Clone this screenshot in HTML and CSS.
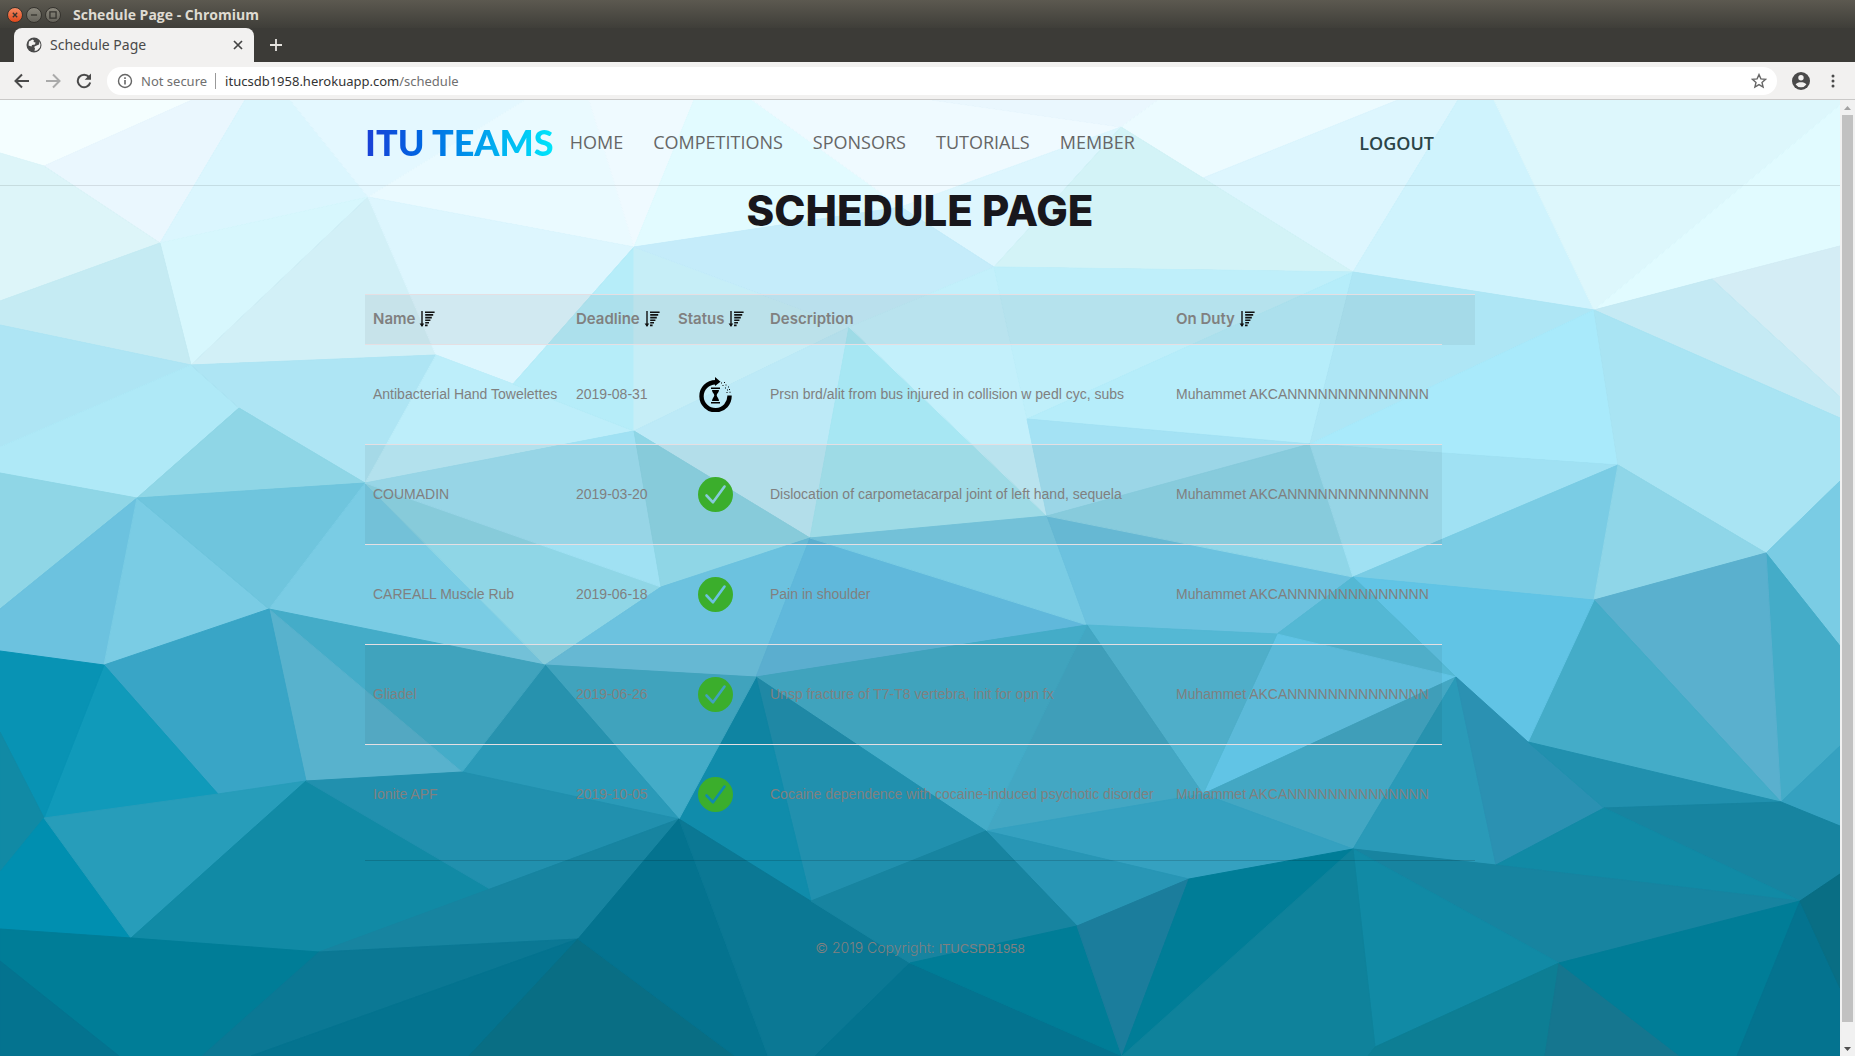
FILE: index.html
```html
<!DOCTYPE html>
<html lang="en">
<head>
<meta charset="utf-8">
<title>Schedule Page</title>
<link rel="stylesheet" href="styles.css">
</head>
<body>
<svg class="defs" aria-hidden="true">
  <mask id="tick">
    <rect width="35" height="35" fill="#fff"/>
    <path d="M8.500 18.500l6.500 6.800L26.500 9.500" fill="none" stroke="#000" stroke-width="2.600" stroke-linecap="round" stroke-linejoin="round"/>
  </mask>
  <symbol id="sort" viewBox="0 0 16 16">
    <path d="M3 0v15" stroke="#111" stroke-width="1.4"/>
    <path d="M0.6 12.6h4.6L3 16z" fill="#111"/>
    <path d="M6 1.2h9.6M6.2 3.9h8M6.2 6.6h6.600M6.2 9.2h5.2M6.2 11.8h3.8M6 14.4h2.6" stroke="#111" stroke-width="1.6"/>
  </symbol>
  <symbol id="done" viewBox="0 0 35 35">
    <circle cx="17.5" cy="17.5" r="17.5" fill="#3bae2c" mask="url(#tick)"/>
  </symbol>
</svg>

<div class="titlebar">
  <button class="win win-close" aria-label="Close window"><svg viewBox="0 0 16 16"><path d="M5.500 5.500l5 5M10.500 5.500l-5 5"/></svg></button>
  <button class="win" aria-label="Minimize"><svg viewBox="0 0 16 16"><path d="M4.500 8h7"/></svg></button>
  <button class="win" aria-label="Maximize"><svg viewBox="0 0 16 16"><path d="M4.500 4.500h7v7h-7z"/></svg></button>
  <span class="win-title">Schedule Page - Chromium</span>
</div>

<div class="tabstrip">
  <div class="tab">
    <svg class="globe" viewBox="0 0 16 16"><circle cx="8" cy="8" r="7.500" fill="#4a4a4a"/><path d="M3 4.500l3.500-2 1.500 1-.5 1.500 2 .5-.5 2-3 .5-.5 1.500-3-1zM9.500 9l3.500-1.500.5-3 1 3-.5 3-3 3-2.500.5.5-3-1-1z" fill="#f2f1f0"/></svg>
    <span class="tab-title">Schedule Page</span>
    <button class="plain" aria-label="Close tab"><svg width="10" height="10" viewBox="0 0 10 10"><path d="M1 1l8 8M9 1l-8 8" stroke="#444" stroke-width="1.700"/></svg></button>
  </div>
  <button class="plain new-tab" aria-label="New tab"><svg width="12" height="12" viewBox="0 0 12 12"><path d="M6 0v12M0 6h12" stroke="#e6e4df" stroke-width="1.800"/></svg></button>
</div>

<div class="toolbar">
  <button class="plain" aria-label="Back"><svg width="16" height="16" viewBox="0 0 16 16" fill="none" stroke="#4a4a4a" stroke-width="2"><path d="M15 8H2M8 1.500L1.500 8 8 14.500"/></svg></button>
  <button class="plain" aria-label="Forward"><svg width="16" height="16" viewBox="0 0 16 16" fill="none" stroke="#aaa" stroke-width="2"><path d="M1 8h13M8 1.500L14.500 8 8 14.500"/></svg></button>
  <button class="plain" aria-label="Reload"><svg width="16" height="16" viewBox="0 0 16 16"><path d="M13 4A6.300 6.300 0 1 0 14.200 9.500" fill="none" stroke="#4a4a4a" stroke-width="2"/><path d="M15 0.500v6.300H8.700z" fill="#4a4a4a"/></svg></button>
  <div class="address">
    <svg width="16" height="16" viewBox="0 0 16 16"><circle cx="8" cy="8" r="6.500" fill="none" stroke="#666" stroke-width="1.400"/><path d="M8 7v4.500M8 4.300v1.600" stroke="#666" stroke-width="1.600"/></svg>
    <span class="secure">Not secure</span>
    <span class="url">itucsdb1958.herokuapp.com<span class="path">/schedule</span></span>
    <button class="plain" aria-label="Bookmark"><svg width="16" height="16" viewBox="0 0 16 16"><path d="M8 1.600l1.900 4.300 4.700.4-3.600 3.100 1.100 4.600L8 11.600 3.900 14 5 9.400 1.400 6.300l4.700-.4z" fill="none" stroke="#666" stroke-width="1.400"/></svg></button>
  </div>
  <button class="plain" aria-label="Profile"><svg width="18" height="18" viewBox="0 0 18 18"><circle cx="9" cy="9" r="9" fill="#4a4a4a"/><circle cx="9" cy="5.800" r="2.700" fill="#f2f1f0"/><path d="M3.600 12.600C4.500 10.800 7 10.200 9 10.200s4.500.6 5.400 2.400A6.500 6.500 0 0 1 9 15.300a6.500 6.500 0 0 1-5.400-2.700z" fill="#f2f1f0"/></svg></button>
  <button class="plain" aria-label="Menu"><svg width="16" height="16" viewBox="0 0 16 16" fill="#4a4a4a"><circle cx="8" cy="3" r="1.500"/><circle cx="8" cy="8" r="1.500"/><circle cx="8" cy="13" r="1.500"/></svg></button>
</div>

<div class="viewport">
  <div class="page">
    <svg class="backdrop" viewBox="0 100 1840 956" preserveAspectRatio="none" aria-hidden="true">
      <g id="facets"></g>
    </svg>
    <header class="site-header">
      <nav class="container nav">
        <a class="brand" href="#">ITU TEAMS</a>
        <a href="#">HOME</a>
        <a href="#">COMPETITIONS</a>
        <a href="#">SPONSORS</a>
        <a href="#">TUTORIALS</a>
        <a href="#">MEMBER</a>
        <a class="logout" href="#">LOGOUT</a>
      </nav>
    </header>
    <main class="container">
      <h1>SCHEDULE PAGE</h1>
      <table class="schedule">
        <colgroup><col class="c-name"><col class="c-deadline"><col class="c-status"><col class="c-desc"><col class="c-duty"><col></colgroup>
        <thead>
          <tr>
            <th>Name <button class="plain" aria-label="Sort by name"><svg class="sort"><use href="#sort"/></svg></button></th>
            <th>Deadline <button class="plain" aria-label="Sort by deadline"><svg class="sort"><use href="#sort"/></svg></button></th>
            <th>Status <button class="plain" aria-label="Sort by status"><svg class="sort"><use href="#sort"/></svg></button></th>
            <th>Description</th>
            <th>On Duty <button class="plain" aria-label="Sort by person on duty"><svg class="sort"><use href="#sort"/></svg></button></th>
            <th></th>
          </tr>
        </thead>
        <tbody>
          <tr>
            <td>Antibacterial Hand Towelettes</td><td>2019-08-31</td>
            <td class="status"><svg class="mark" viewBox="0 0 35 35" role="img" aria-label="Pending">
              <path d="M17.500 5.200A14 14 0 1 0 31.500 18.500" fill="none" stroke="#000" stroke-width="4.400"/>
              <path d="M17 0l5.500 4.700L17 9z"/>
              <path d="M13 10.500h9v1.400h-9zM13 25h9v1.400h-9zM14 13h7c0 2.600-2.300 3.600-2.300 5.300S21 21.500 21 24h-7c0-2.500 2.300-4 2.300-5.700S14 15.600 14 13z"/>
              <path d="M23 5.500h1v1h-1zM26 5h1v1h-1zM24.500 8h1v1h-1zM27.500 7.500h1v1h-1zM27 10.500h1v1h-1zM30 9.500h1v1h-1zM29 12.500h1v1h-1zM31 12h1v1h-1zM28.500 15h1v1h-1zM31.500 14.800h1v1h-1z"/>
            </svg></td>
            <td>Prsn brd/alit from bus injured in collision w pedl cyc, subs</td><td>Muhammet AKCANNNNNNNNNNNNNN</td>
          </tr>
          <tr>
            <td>COUMADIN</td><td>2019-03-20</td>
            <td class="status"><svg class="mark" role="img" aria-label="Done"><use href="#done"/></svg></td>
            <td>Dislocation of carpometacarpal joint of left hand, sequela</td><td>Muhammet AKCANNNNNNNNNNNNNN</td>
          </tr>
          <tr>
            <td>CAREALL Muscle Rub</td><td>2019-06-18</td>
            <td class="status"><svg class="mark" role="img" aria-label="Done"><use href="#done"/></svg></td>
            <td>Pain in shoulder</td><td>Muhammet AKCANNNNNNNNNNNNNN</td>
          </tr>
          <tr>
            <td>Gliadel</td><td>2019-06-26</td>
            <td class="status"><svg class="mark" role="img" aria-label="Done"><use href="#done"/></svg></td>
            <td>Unsp fracture of T7-T8 vertebra, init for opn fx</td><td>Muhammet AKCANNNNNNNNNNNNNN</td>
          </tr>
          <tr>
            <td>Ionite APF</td><td>2019-10-05</td>
            <td class="status"><svg class="mark" role="img" aria-label="Done"><use href="#done"/></svg></td>
            <td>Cocaine dependence with cocaine-induced psychotic disorder</td><td>Muhammet AKCANNNNNNNNNNNNNN</td>
          </tr>
        </tbody>
      </table>
      <hr>
    </main>
    <footer>© 2019 Copyright: <a href="#">ITUCSDB1958</a></footer>
  </div>
  <div class="scrollbar" aria-hidden="true">
    <svg width="15" height="15" viewBox="0 0 15 15"><path d="M4 10h7L7.500 6z" fill="#a3a3a3"/></svg>
    <div class="track"><div class="thumb"></div></div>
    <svg width="15" height="15" viewBox="0 0 15 15"><path d="M4 6h7l-3.500 4z" fill="#505050"/></svg>
  </div>
</div>
<script src="facets.js"></script>
</body>
</html>
```
FILE: styles.css
```css
* { box-sizing: border-box; }
body {
  margin: 0;
  height: 100vh;
  display: flex;
  flex-direction: column;
  overflow: hidden;
  font-family: "Open Sans", sans-serif;
}
a { color: inherit; text-decoration: none; }
.defs { position: absolute; width: 0; height: 0; }
.plain { border: 0; padding: 0; background: none; display: inline-flex; align-items: center; justify-content: center; }

/* window frame */
.titlebar {
  height: 28px;
  flex: none;
  display: flex;
  align-items: center;
  gap: 3px;
  padding: 1px 7px 0;
  background: linear-gradient(#5c5950, #3f3e39);
}
.win {
  width: 16px;
  height: 16px;
  padding: 0;
  border: 1px solid #35332e;
  border-radius: 50%;
  background: linear-gradient(#8a877c, #65635b);
  display: flex;
}
.win svg { width: 14px; height: 14px; fill: none; stroke: #35332e; stroke-width: 1.5; }
.win-close { background: linear-gradient(#f58a62, #e0481b); }
.win-title { margin-left: 9px; font: 700 14px/20px "Open Sans", sans-serif; color: #dfdbd2; }

.tabstrip { height: 34px; flex: none; display: flex; background: #3c3b37; padding-left: 14px; }
.tab {
  width: 240px;
  display: flex;
  align-items: center;
  gap: 8px;
  padding: 0 11px 0 12px;
  border-radius: 8px 8px 0 0;
  background: #f2f1f0;
  font: 14px/20px "Noto Sans", sans-serif;
  color: #4a4a4a;
}
.globe { width: 16px; height: 16px; }
.tab-title { flex: 1; }
.new-tab { width: 44px; }

.toolbar {
  height: 38px;
  flex: none;
  display: flex;
  align-items: center;
  gap: 15px;
  padding: 0 14px;
  background: #f2f1f0;
  border-bottom: 1px solid #cac9c8;
}
.address {
  flex: 1;
  height: 28px;
  display: flex;
  align-items: center;
  padding: 0 10px;
  border-radius: 14px;
  background: #fff;
  font: 13px/20px "Noto Sans", sans-serif;
}
.secure { color: #707070; padding: 0 8px; line-height: 16px; border-right: 1px solid #999; }
.url { flex: 1; padding-left: 9px; color: #333; }
.path { color: #707070; }

/* web page */
.viewport { flex: 1; display: flex; min-height: 0; }
.page { flex: 1; position: relative; z-index: 0; overflow: hidden; color: gray; background: #1784a0; }
.backdrop { position: absolute; inset: 0; width: 100%; height: 100%; z-index: -1; }
.container { width: 100%; max-width: 1110px; margin: 0 auto; }

.site-header { border-bottom: 1px solid rgba(0, 0, 0, .1); }
.nav { display: flex; align-items: center; gap: 30px; height: 85px; padding-bottom: 2px; font-size: 18px; color: #666; }
.brand {
  margin-right: -14px;
  font: 900 36px/44px "Lato Black", Lato, sans-serif;
  color: transparent;
  background: linear-gradient(90deg, #1a3fd6, #0066e2 30%, #00e6fb);
  background-clip: text;
}
.logout { margin: 2px 41px 0 auto; font-weight: 600; color: #2b4447; }

h1 { margin: 0 0 58px; font: 800 42px/50px Inter, sans-serif; color: #18171c; text-align: center; }

.schedule { width: 100%; table-layout: fixed; border-collapse: collapse; font: 14px/20px "Liberation Sans", Arial, sans-serif; }
.c-name { width: 203px; }
.c-deadline { width: 102px; }
.c-status { width: 92px; }
.c-desc { width: 406px; }
.c-duty { width: 274px; }
th, td { padding: 0 8px 2px; text-align: left; border-top: 1px solid #e5dfe3; white-space: nowrap; }
th { height: 50px; padding-right: 0; font: 600 15px/20px Inter, sans-serif; background: rgba(0, 0, 0, .05); }
td { height: 100px; }
tbody tr:nth-child(even) td { background: rgba(0, 0, 0, .05); }
.status { padding: 0 10px 0 8px; }
.sort { width: 16px; height: 16px; display: block; }
th .plain { vertical-align: middle; }
.mark { width: 35px; height: 35px; display: block; margin: 0 auto; }
hr { margin: 15px 0 0; border: 0; border-top: 1px solid rgba(0, 0, 0, .15); }
footer { margin-top: 77px; text-align: center; font: 300 14px/20px Inter, sans-serif; }
footer a { font: 13px/20px "Liberation Sans", Arial, sans-serif; }

.scrollbar { width: 15px; flex: none; display: flex; flex-direction: column; background: #f1f1f1; }
.track { flex: 1; padding: 0 2px; }
.thumb { height: 98%; background: #c1c1c1; }
```
FILE: facets.js
```js
// Low-poly backdrop: shared vertices, then one facet per line (colour + corners).
const v = {
  A:[44,166],B:[160,243],C:[191,365],D:[368,197],E:[436,355],F:[513,384],G:[239,408],H:[137,498],I:[365,483],
  J:[634,247],K:[901,207],L:[994,267],M:[1121,127],N:[1203,178],P:[1353,272],Q:[1594,310],R:[1712,279],S:[1310,444],
  T:[1618,465],U:[1766,553],V:[849,327],W:[634,431],X:[810,538],Y:[1047,516],Z:[1027,419],AA:[661,587],BB:[1353,577],
  CC:[1594,600],DD:[1087,625],EE:[1277,634],FF:[1456,677],GG:[1528,742],HH:[1203,794],II:[986,831],JJ:[1353,849],
  KK:[1189,879],LL:[1077,926],MM:[1122,1056],OO:[756,677],PP:[545,665],QQ:[679,819],RR:[811,901],SS:[910,963],
  TT:[578,939],UU:[319,952],VV:[490,889],XX:[462,772],YY:[306,781],ZZ:[269,609],A1:[104,665],A2:[218,794],
  A3:[44,818],A4:[131,938],B1:[1781,802],B2:[1604,808],B3:[1496,865],B4:[1800,901],B5:[1559,963],B6:[1375,1047]
};
const facets = `
f4feff 0,100 192,100 A 0,153
eaf7fe A 192,100 245,100 B
ddf5f9 0,153 A B 0,301
dbf6fe 245,100 290,100 D B
e4f8ff 290,100 525,100 D
eafaff D 525,100 589,100 J
effaff J 589,100 694,100
e2fbff J 694,100 752,100 K
effaff 752,100 932,100 M K
eaf7fe 932,100 1158,100 M
ecfbff M 1158,100 1398,100 N
ddf6fe N 1398,100 1458,100 P
cff3fd P 1458,100 1494,100 Q
ddf7fc Q 1494,100 1840,100 1840,105
e1fbff Q 1840,105 1840,246 R
d4edf5 R 1840,246 1840,397
c5eaf4 Q R 1840,397 1840,418
d7f7fd B D C
d2f0f7 D E C
ddf6fe D J F E
ddf6fe K M L
d3f3f7 L M N P
c5ebf3 0,301 B C 0,325
aee5f4 0,325 C 0,447
afe9f7 C G H 0,473 0,447
aee5f4 C E I G
bdeefa E F W I
b6edf9 F J W
c6eef7 J V W
c5ecfa J K L V
bdeaf7 W V X
a7e7f3 V Y X
c3f0fb V L Z Y
bfeffa L P Z
b6edfa Z P S
aee6f5 P Q S
a9eafb Q T S
a9e4f3 Q 1840,418 1840,481 U T
a4e2f4 Z S Y
8fd6e6 G I H
8fd6e6 0,473 H 0,609
6cc2df 0,609 H A1 0,651
7acce4 H ZZ A1
6fc5dd H I ZZ
7acce4 I PP ZZ
8fd6e6 I AA PP
a0e1f3 I W AA
8fd6e6 W X AA
6cc2df X OO PP AA
60b8db X DD OO
7acce4 X Y DD
6cc2df Y BB EE DD
8fd6e8 Y S BB
a0e1f3 S T BB
7acce4 T CC BB
8fd6e8 T U CC
7acce4 U 1840,481 1840,646
44acc8 U 1840,646 1840,746 B1
5ab0ce CC U B1
44acc8 CC B1 GG
61c4e5 BB CC GG FF
54b8d4 BB FF EE
61c4e5 EE FF HH
54b8d4 DD EE HH
43a7c3 DD HH II
43a7c3 HH FF JJ
35a1c0 II HH JJ KK
2896b5 II KK LL
44acc8 OO DD II
2190ae OO II RR
108cab OO RR QQ
44acc8 PP OO QQ
2a9ab8 XX PP QQ
44acc8 ZZ PP XX
58b2cd ZZ XX YY
39a5c6 A1 ZZ YY A2
109aba A1 A2 A3
0893b4 0,651 A1 A3 0,732
118aa5 0,732 A3 0,872
008fb0 0,872 A3 A4 0,929
279dba A3 A2 YY A4
118aa5 YY VV UU A4
2190ae YY XX QQ VV
1784a0 VV QQ TT UU
007d97 0,929 A4 UU 202,1056 119,1056 0,961
04738f 0,961 119,1056 0,1056
0b7894 UU TT 251,1056 202,1056
04738f TT 469,1056 251,1056
096e84 TT 735,1056 469,1056
04738f TT QQ 768,1056 735,1056
0b7894 QQ SS 815,1056 768,1056
04738f SS MM 815,1056
1784a0 RR II LL SS
007d97 SS LL MM
1b7d9c LL KK MM
007d97 KK JJ MM
2a9ab8 FF B3 JJ
2b91b2 FF GG B2 B3
2190ae GG B1 B2
35a1c0 B1 1840,746 1840,826
1784a0 B2 B1 1840,826 1840,874 B4
118aa5 B2 B4 B3
1784a0 JJ B3 B4 B5
118aa5 JJ B5 B6
0f829b JJ B6 1368,1056 MM
0d7e94 B5 1545,1056 1368,1056 B6
15768f B5 1680,1056 1545,1056
007d97 B5 B4 1737,1056 1680,1056
04738f B4 1840,988 1840,1056 1737,1056
096e84 B4 1840,874 1840,988`;

const group = document.getElementById("facets");
for (const line of facets.trim().split("\n")) {
  const [hex, ...corners] = line.split(" ");
  const p = document.createElementNS("http://www.w3.org/2000/svg", "polygon");
  p.setAttribute("points", corners.map(c => v[c] ? v[c].join(",") : c).join(" "));
  p.setAttribute("fill", "#" + hex);
  p.setAttribute("stroke", "#" + hex);
  group.appendChild(p);
}
```
